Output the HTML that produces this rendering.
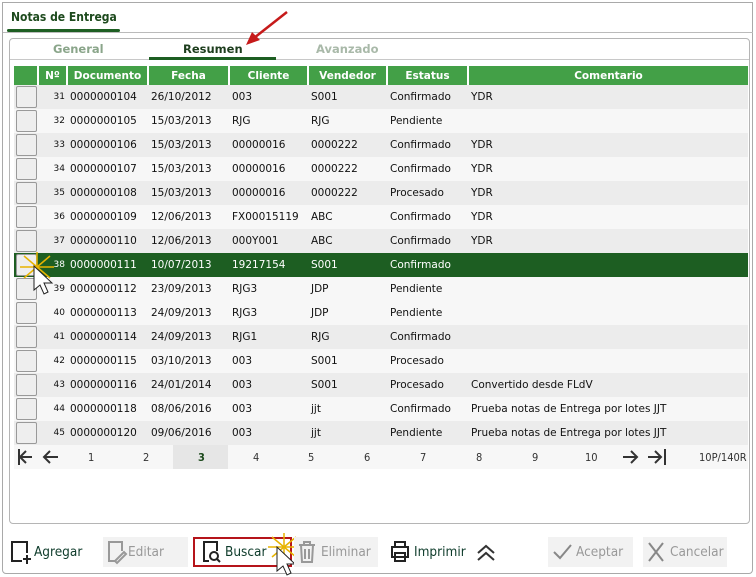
<!DOCTYPE html>
<html><head><meta charset="utf-8"><style>
*{margin:0;padding:0;box-sizing:border-box}
body{width:756px;height:577px;background:#fff;font-family:"DejaVu Sans","Liberation Sans",sans-serif;position:relative;overflow:hidden;color:#111}
.a{position:absolute}
#outer{left:2px;top:2px;width:751px;height:572px;border:1px solid #a9a9a9;border-radius:0 0 4px 4px}
#inner{left:9px;top:38px;width:741px;height:486px;border:1px solid #b5b5b5;border-radius:4px}
table{position:absolute;left:14px;top:66px;width:734px;border-collapse:collapse;font-size:10.5px}
th{background:#43a047;color:#fff;height:19px;font-weight:bold;border-left:2px solid #fff;font-size:10.5px}
th:first-child{border-left:none}
td{height:24px;white-space:nowrap;padding-left:3px}
tr.o td{background:#ececec}
tr.e td{background:#f7f7f7}
tr.s td{background:#1d5e22;color:#fff}
td.n{font-size:9px;text-align:right;padding-right:2px;padding-left:0}
td.c{padding-left:2px}
.cb{width:21px;height:22px;border:1px solid #999;border-radius:2px;background:#eee}
.btn{position:absolute;top:537px;height:30px;font-size:13.5px;display:flex;align-items:center;font-family:"DejaVu Sans Condensed","DejaVu Sans",sans-serif}
.dis{background:#f2f2f2;color:#999}
.en{color:#0d3b2a}
</style></head><body>
<div class="a" id="outer"></div>
<div class="a" style="left:11px;top:10px;font-size:12px;font-weight:bold;color:#1d4a1d;font-family:'DejaVu Sans Condensed','DejaVu Sans',sans-serif">Notas de Entrega</div>
<div class="a" style="left:7px;top:29px;width:113px;height:3px;background:#1d5e22;border-radius:2px"></div>
<div class="a" style="left:3px;top:32px;width:750px;height:1px;background:#bbb"></div>
<div class="a" id="inner"></div>
<div class="a" style="left:10px;top:59px;width:739px;height:1px;background:#c8c8c8"></div>
<div class="a" style="left:53px;top:42px;font-size:11.5px;font-weight:bold;color:#8aa58a">General</div>
<div class="a" style="left:183px;top:42px;font-size:11.5px;font-weight:bold;color:#1d3d1d">Resumen</div>
<div class="a" style="left:316px;top:42px;font-size:11.5px;font-weight:bold;color:#a9b9a9">Avanzado</div>
<div class="a" style="left:149px;top:57px;width:127px;height:3px;background:#1d5e22"></div>
<svg class="a" style="left:240px;top:8px" width="55" height="40"><line x1="47" y1="4" x2="14" y2="30" stroke="#c61a1a" stroke-width="2.5"/><polygon points="6,37 12,24 20,32" fill="#c61a1a"/></svg>
<table>
<tr><th style="width:24px"></th><th style="width:29px">Nº</th><th style="width:81px">Documento</th><th style="width:81px">Fecha</th><th style="width:79px">Cliente</th><th style="width:79px">Vendedor</th><th style="width:81px">Estatus</th><th>Comentario</th></tr>
<tr class="o"><td class="c"><div class="cb"></div></td><td class="n">31</td><td>0000000104</td><td>26/10/2012</td><td>003</td><td>S001</td><td>Confirmado</td><td>YDR</td></tr>
<tr class="e"><td class="c"><div class="cb"></div></td><td class="n">32</td><td>0000000105</td><td>15/03/2013</td><td>RJG</td><td>RJG</td><td>Pendiente</td><td></td></tr>
<tr class="o"><td class="c"><div class="cb"></div></td><td class="n">33</td><td>0000000106</td><td>15/03/2013</td><td>00000016</td><td>0000222</td><td>Confirmado</td><td>YDR</td></tr>
<tr class="e"><td class="c"><div class="cb"></div></td><td class="n">34</td><td>0000000107</td><td>15/03/2013</td><td>00000016</td><td>0000222</td><td>Confirmado</td><td>YDR</td></tr>
<tr class="o"><td class="c"><div class="cb"></div></td><td class="n">35</td><td>0000000108</td><td>15/03/2013</td><td>00000016</td><td>0000222</td><td>Procesado</td><td>YDR</td></tr>
<tr class="e"><td class="c"><div class="cb"></div></td><td class="n">36</td><td>0000000109</td><td>12/06/2013</td><td>FX00015119</td><td>ABC</td><td>Confirmado</td><td>YDR</td></tr>
<tr class="o"><td class="c"><div class="cb"></div></td><td class="n">37</td><td>0000000110</td><td>12/06/2013</td><td>000Y001</td><td>ABC</td><td>Confirmado</td><td>YDR</td></tr>
<tr class="s"><td class="c"><div class="cb"></div></td><td class="n">38</td><td>0000000111</td><td>10/07/2013</td><td>19217154</td><td>S001</td><td>Confirmado</td><td></td></tr>
<tr class="e"><td class="c"><div class="cb"></div></td><td class="n">39</td><td>0000000112</td><td>23/09/2013</td><td>RJG3</td><td>JDP</td><td>Pendiente</td><td></td></tr>
<tr class="e"><td class="c"><div class="cb"></div></td><td class="n">40</td><td>0000000113</td><td>24/09/2013</td><td>RJG3</td><td>JDP</td><td>Pendiente</td><td></td></tr>
<tr class="o"><td class="c"><div class="cb"></div></td><td class="n">41</td><td>0000000114</td><td>24/09/2013</td><td>RJG1</td><td>RJG</td><td>Confirmado</td><td></td></tr>
<tr class="e"><td class="c"><div class="cb"></div></td><td class="n">42</td><td>0000000115</td><td>03/10/2013</td><td>003</td><td>S001</td><td>Procesado</td><td></td></tr>
<tr class="o"><td class="c"><div class="cb"></div></td><td class="n">43</td><td>0000000116</td><td>24/01/2014</td><td>003</td><td>S001</td><td>Procesado</td><td>Convertido desde FLdV</td></tr>
<tr class="e"><td class="c"><div class="cb"></div></td><td class="n">44</td><td>0000000118</td><td>08/06/2016</td><td>003</td><td>jjt</td><td>Confirmado</td><td>Prueba notas de Entrega por lotes JJT</td></tr>
<tr class="o"><td class="c"><div class="cb"></div></td><td class="n">45</td><td>0000000120</td><td>09/06/2016</td><td>003</td><td>jjt</td><td>Pendiente</td><td>Prueba notas de Entrega por lotes JJT</td></tr>
</table>
<div class="a" style="left:14px;top:445px;width:734px;height:24px;background:#f7f7f7"></div>
<div class="a" style="left:173px;top:445px;width:55px;height:24px;background:#e6e6e6"></div>
<svg class="a" style="left:16px;top:448px" width="50" height="18" fill="none" stroke="#333" stroke-width="2"><line x1="3" y1="1" x2="3" y2="17"/><path d="M16 9H5M10 3L4 9l6 6"/><path d="M42 9H28M34 3L28 9l6 6"/></svg>
<svg class="a" style="left:620px;top:448px" width="50" height="18" fill="none" stroke="#333" stroke-width="2"><path d="M3 9h14M11 3l6 6-6 6"/><path d="M28 9h13M35 3l6 6-6 6"/><line x1="45" y1="1" x2="45" y2="17"/></svg>
<div class="a" style="top:451px;left:0;font-size:11px;color:#333;font-family:'DejaVu Sans Condensed','DejaVu Sans',sans-serif">
<span class="a" style="left:88px">1</span><span class="a" style="left:143px">2</span><span class="a" style="left:198px;font-weight:bold;color:#1d4a1d">3</span><span class="a" style="left:253px">4</span><span class="a" style="left:308px">5</span><span class="a" style="left:364px">6</span><span class="a" style="left:420px">7</span><span class="a" style="left:476px">8</span><span class="a" style="left:532px">9</span><span class="a" style="left:585px">10</span><span class="a" style="left:699px;white-space:nowrap">10P/140R</span></div>
<svg class="a" style="left:20px;top:252px" width="36" height="46"><g stroke="#e8b400" stroke-width="1.5"><line x1="4" y1="4" x2="30" y2="26"/><line x1="30" y1="4" x2="4" y2="26"/><line x1="17" y1="0" x2="17" y2="30"/><line x1="0" y1="15" x2="34" y2="15"/></g><path d="M14 14v24l6-5 4 9 4-2-4-9h8z" fill="#fff" stroke="#222"/></svg>
<div class="btn en" style="left:10px;width:80px"><svg width="22" height="26" fill="none" stroke="#222" stroke-width="2"><path d="M12 22H2V3h15v11"/><path d="M17 16v9M13 20h8"/></svg><span style="margin-left:2px">Agregar</span></div>
<div class="btn dis" style="left:103px;width:85px;padding-left:3px"><svg width="22" height="26" fill="none" stroke="#999" stroke-width="2"><path d="M9 22H3V3h13v9"/><path d="M9 22l9-9 2 2-9 9z"/></svg><span>Editar</span></div>
<div class="btn en" style="left:193px;width:99px;border:2px solid #b5141a;padding-left:6px"><svg width="22" height="26" fill="none" stroke="#222" stroke-width="2"><path d="M8 22H3V3h13v9"/><circle cx="13" cy="17" r="4"/><path d="M16 20l3 3"/></svg><span style="margin-left:2px">Buscar</span></div>
<svg class="a" style="left:268px;top:533px" width="34" height="44"><g stroke="#e8b400" stroke-width="1.5"><line x1="4" y1="4" x2="28" y2="24"/><line x1="28" y1="4" x2="4" y2="24"/><line x1="16" y1="0" x2="16" y2="28"/><line x1="0" y1="14" x2="32" y2="14"/></g><path d="M9 14v24l6-5 4 9 4-2-4-9h8z" fill="#fff" stroke="#222"/></svg>
<div class="btn dis" style="left:294px;width:84px;padding-left:2px"><svg width="22" height="26" fill="none" stroke="#999" stroke-width="2"><path d="M3 6h16M8 6V3h6v3M5 6l1 17h10l1-17M9 10v10M13 10v10"/></svg><span style="margin-left:3px">Eliminar</span></div>
<div class="btn en" style="left:389px;width:90px"><svg width="22" height="26" fill="none" stroke="#222" stroke-width="2"><path d="M6 8V3h10v5M3 8h16v10H3zM6 14h10v8H6z"/></svg><span style="margin-left:3px">Imprimir</span></div>
<svg class="a" style="left:476px;top:543px" width="20" height="20" fill="none" stroke="#333" stroke-width="2"><path d="M2 10l8-7 8 7M2 17l8-7 8 7"/></svg>
<div class="btn dis" style="left:548px;width:85px;padding-left:3px"><svg width="22" height="26" fill="none" stroke="#888" stroke-width="2"><path d="M3 13l6 6L20 6"/></svg><span style="margin-left:3px">Aceptar</span></div>
<div class="btn dis" style="left:643px;width:84px;padding-left:3px"><svg width="20" height="26" fill="none" stroke="#888" stroke-width="2"><path d="M3 4l14 18M17 4L3 22"/></svg><span style="margin-left:4px">Cancelar</span></div>
</body></html>
